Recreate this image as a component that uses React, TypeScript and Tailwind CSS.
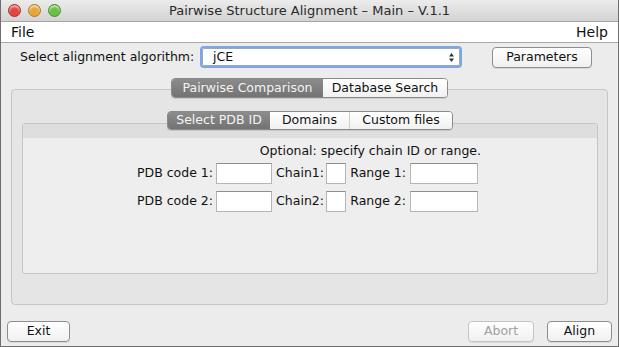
import React from "react";

const font = { fontFamily: '"DejaVu Sans", "Liberation Sans", sans-serif' };

function TrafficLight({ color, ring }: { color: string; ring: string }) {
  return (
    <div
      className={`w-[13px] h-[13px] rounded-full border ${ring} ${color} shadow-[inset_0_2px_2px_rgba(255,255,255,0.6)]`}
    />
  );
}

function MacButton({ label, disabled, w }: { label: string; disabled?: boolean; w: string }) {
  return (
    <div
      className={`${w} h-[21px] flex items-center justify-center rounded-[4px] border ${
        disabled ? "border-[#c4c4c4] text-[#a0a0a0]" : "border-[#8e8e8e] text-[#111]"
      } bg-gradient-to-b from-white to-[#f0f0f0] text-[12.5px] whitespace-nowrap shadow-[0_1px_0_rgba(0,0,0,0.08)]`}
    >
      {label}
    </div>
  );
}

function Field({ w }: { w: string }) {
  return <div className={`${w} h-[21px] bg-white border border-[#b5b5b5] border-t-[#8f8f8f]`} />;
}

function Tabs({ items, h, pads }: { items: string[]; h: string; pads: string[] }) {
  return (
    <div className="relative z-10 flex justify-center">
      <div className={`flex ${h} rounded-[4px] border border-[#8a8a8a] overflow-hidden shadow-[0_1px_0_rgba(0,0,0,0.1)]`}>
        {items.map((t, i) => (
          <div
            key={t}
            className={`flex items-center justify-center whitespace-nowrap text-[12.5px] ${pads[i]} ${
              i === 0
                ? "bg-gradient-to-b from-[#8c8c8c] to-[#737373] text-[#f4f4f4]"
                : "bg-gradient-to-b from-white to-[#f1f1f1] text-[#111]"
            } ${i === 2 ? "border-l border-[#cfcfcf]" : ""}`}
          >
            {t}
          </div>
        ))}
      </div>
    </div>
  );
}

function PdbRow({ n }: { n: number }) {
  return (
    <div className="flex items-center h-[21px] text-[12.5px] text-[#111] whitespace-nowrap">
      <div className="w-[93px] text-right">PDB code {n}:</div>
      <div className="ml-[3px]"><Field w="w-[56px]" /></div>
      <div className="w-[52px] text-right">Chain{n}:</div>
      <div className="ml-[2px]"><Field w="w-[20px]" /></div>
      <div className="w-[60px] text-right">Range {n}:</div>
      <div className="ml-[4px]"><Field w="w-[68px]" /></div>
    </div>
  );
}

export default function App() {
  return (
    <div
      style={font}
      className="w-[619px] h-[347px] flex flex-col bg-[#ececec] border-l border-r border-b border-[#6e6e6e] overflow-hidden"
    >
      {/* title bar */}
      <div className="h-[22px] flex items-center relative bg-gradient-to-b from-[#ececec] to-[#d3d3d3] border-b border-[#a4a4a4]">
        <div className="absolute left-[7px] top-[4px] flex gap-[7px]">
          <TrafficLight color="bg-[#e0463f]" ring="border-[#a8322c]" />
          <TrafficLight color="bg-[#e8a53a]" ring="border-[#ae7a24]" />
          <TrafficLight color="bg-[#6bbf45]" ring="border-[#4b8c2e]" />
        </div>
        <div className="w-full text-center text-[13px] text-[#2a2a2a]">
          Pairwise Structure Alignment – Main – V.1.1
        </div>
      </div>

      {/* menu bar */}
      <div className="h-[21px] flex items-center justify-between px-[10px] bg-white border-b border-[#a9a9a9] text-[14px] text-[#111]">
        <span>File</span>
        <span>Help</span>
      </div>

      {/* algorithm row */}
      <div className="mt-[3px] h-[22px] flex items-center text-[12.5px] text-[#111] whitespace-nowrap">
        <div className="ml-[19px] w-[174px]">Select alignment algorithm:</div>
        <div className="ml-[6px] w-[262px] h-[22px] rounded-[4px] border-2 border-[#7ea6e0] bg-white flex items-center justify-between pl-[11px] pr-[5px] shadow-[inset_0_0_0_1px_#9aa9bf]">
          <span>jCE</span>
          <svg width="7" height="11" viewBox="0 0 7 11">
            <path d="M3.5 1 L6 4.5 L1 4.5 Z" fill="#333" />
            <path d="M3.5 10 L6 6.5 L1 6.5 Z" fill="#333" />
          </svg>
        </div>
        <div className="ml-[30px]">
          <MacButton label="Parameters" w="w-[100px]" />
        </div>
      </div>

      {/* outer tabbed pane */}
      <div className="mt-[10px] px-[10px]">
        <Tabs items={["Pairwise Comparison", "Database Search"]} h="h-[20px]" pads={["w-[151px]", "w-[124px]"]} />
        <div className="-mt-[9px] h-[216px] rounded-[4px] border border-[#c6c6c6] bg-[#e5e5e5] pt-[21px] pl-[10px] pr-[9px]">
          <Tabs items={["Select PDB ID", "Domains", "Custom files"]} h="h-[19px]" pads={["w-[102px]", "w-[79px]", "w-[103px]"]} />
          <div className="-mt-[7px] h-[151px] rounded-[3px] border border-[#c4c4c4] bg-[#eeeeee] flex flex-col">
            <div className="h-[14px] bg-[#dedede]" />
            <div className="ml-[97px] w-[361px] flex flex-col">
              <div className="mt-[5px] h-[16px] flex items-center justify-end text-[12.5px] text-[#111] whitespace-nowrap">
                Optional: specify chain ID or range.
              </div>
              <div className="mt-[4px] flex flex-col gap-[7px]">
                <PdbRow n={1} />
                <PdbRow n={2} />
              </div>
            </div>
          </div>
        </div>
      </div>

      {/* bottom buttons */}
      <div className="mt-[16px] flex items-center px-[6px]">
        <MacButton label="Exit" w="w-[63px]" />
        <div className="flex-1" />
        <MacButton label="Abort" disabled w="w-[66px]" />
        <div className="ml-[13px]">
          <MacButton label="Align" w="w-[65px]" />
        </div>
      </div>
    </div>
  );
}
